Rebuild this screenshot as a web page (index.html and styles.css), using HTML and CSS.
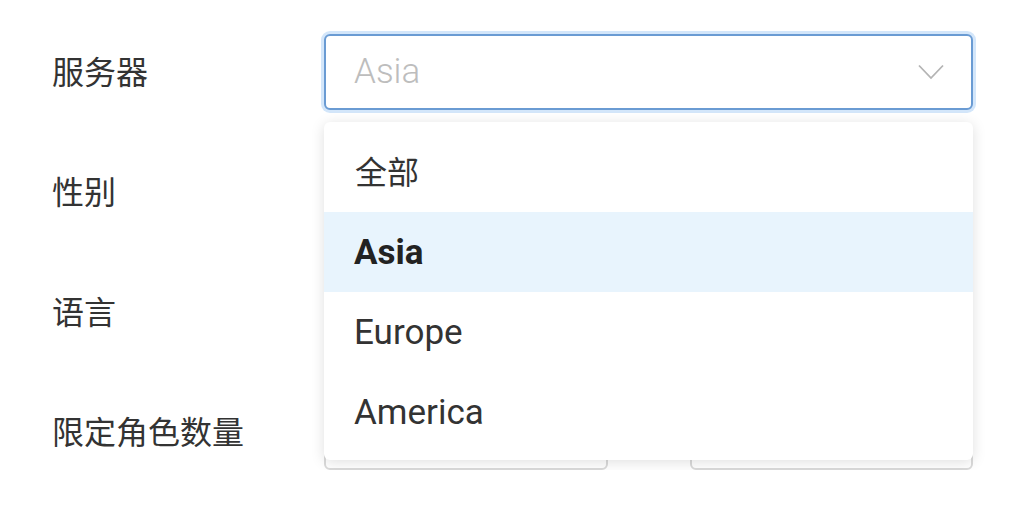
FILE: index.html
```html
<!DOCTYPE html>
<html lang="zh-CN">
<head>
<meta charset="utf-8">
<title>筛选</title>
<link rel="stylesheet" href="styles.css">
</head>
<body>
<form class="form">
  <div class="row">
    <label class="label">服务器</label>
    <div class="control">
      <div class="select focused">
        <span class="placeholder">Asia</span>
        <svg class="chev" width="26" height="16" viewBox="0 0 26 16"><path d="M1 1.5 L13 14 L25 1.5" fill="none" stroke="#b4b4b4" stroke-width="1.8"/></svg>
      </div>
      <ul class="dropdown">
        <li class="opt zh">全部</li>
        <li class="opt active">Asia</li>
        <li class="opt">Europe</li>
        <li class="opt">America</li>
      </ul>
    </div>
  </div>
  <div class="row">
    <label class="label">性别</label>
    <div class="control"><div class="select"></div></div>
  </div>
  <div class="row">
    <label class="label">语言</label>
    <div class="control"><div class="select"></div></div>
  </div>
  <div class="row">
    <label class="label">限定角色数量</label>
    <div class="control range">
      <div class="input"></div>
      <span class="dash">-</span>
      <div class="input"></div>
    </div>
  </div>
</form>
</body>
</html>
```

FILE: styles.css
```css
html, body {
  margin: 0;
  padding: 0;
  background: #fff;
}
body {
  font-family: Roboto, "Noto Sans CJK SC", sans-serif;
  color: #333;
}
.form {
  padding: 34px 51px 0 52px;
  display: flex;
  flex-direction: column;
  gap: 44px;
}
.row {
  display: grid;
  grid-template-columns: 272px 1fr;
  align-items: center;
  height: 76px;
}
.label {
  font-family: "Noto Sans CJK SC", sans-serif;
  font-size: 32px;
  color: #333;
  line-height: 1;
  padding-bottom: 5px;
}
.control {
  position: relative;
  height: 76px;
}
.select {
  box-sizing: border-box;
  height: 76px;
  border: 2px solid #dadada;
  border-radius: 6px;
  display: flex;
  align-items: center;
  justify-content: space-between;
  padding: 0 27px 0 28px;
  background: #fff;
}
.select.focused {
  border-color: #6a9bd3;
  box-shadow: 0 0 0 3px #d3e6fa;
}
.placeholder {
  font-size: 35px;
  font-weight: 300;
  color: #bdbdbd;
  padding-bottom: 2px;
}
.chev {
  display: block;
}
.dropdown {
  position: absolute;
  left: 0;
  right: 0;
  top: 88px;
  margin: 0;
  padding: 10px 0 8px;
  list-style: none;
  background: #fff;
  border-radius: 6px;
  box-shadow: 0 2px 14px rgba(0, 0, 0, 0.13);
  z-index: 10;
}
.opt {
  height: 80px;
  display: flex;
  align-items: center;
  padding: 0 30px;
  font-size: 35px;
  color: #333;
}
.opt.zh {
  font-size: 32px;
  padding-left: 31px;
  padding-bottom: 4px;
  box-sizing: border-box;
}
.opt.active {
  background: #e8f4fd;
  font-weight: 700;
  color: #222;
}
.range {
  display: flex;
  align-items: center;
  gap: 0;
}
.input {
  box-sizing: border-box;
  flex: 1;
  height: 76px;
  border: 2px solid #dadada;
  border-radius: 6px;
  background: #fff;
}
.dash {
  width: 82px;
  text-align: center;
  font-size: 30px;
  color: #999;
}
```
